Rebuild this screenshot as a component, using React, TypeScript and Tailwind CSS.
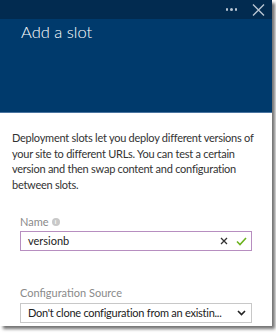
import React from "react";

export default function App() {
  return (
    <div className="w-[276px] h-[335px] bg-white" style={{ fontFamily: 'Lato, "Noto Sans", sans-serif' }}>
      <div className="w-[272px] h-[326px] bg-white flex flex-col shadow-[3px_3px_3px_rgba(0,0,0,0.55)]">
        <div className="h-[19px] bg-[#022b50] flex items-center justify-end pr-[7px] gap-[15px] shrink-0">
          <span className="flex gap-[2px] items-center">
            <span className="w-[2.5px] h-[2.5px] bg-[#b8c4d2] rounded-full" />
            <span className="w-[2.5px] h-[2.5px] bg-[#b8c4d2] rounded-full" />
            <span className="w-[2.5px] h-[2.5px] bg-[#b8c4d2] rounded-full" />
          </span>
          <svg width="13" height="12" viewBox="0 0 13 12">
            <path d="M1 0.5 L12 11.5 M12 0.5 L1 11.5" stroke="#b8c4d2" strokeWidth="1.4" />
          </svg>
        </div>
        <div className="h-[94px] bg-[#003a6c] shrink-0 pl-[21px] pt-[3px] border-b border-[#4a74a0]">
          <div className="text-[16.5px] leading-[20px] text-white font-light">Add a slot</div>
        </div>
        <div className="pl-[12px] pr-[10px] pt-[17px] text-[11px] leading-[15.5px] text-[#333] tracking-[-0.25px]">
          Deployment slots let you deploy different versions of your site to different URLs. You can test a certain version and then swap content and configuration between slots.
        </div>
        <div className="pl-[20px] pr-[20px] pt-[22px]">
          <div className="flex items-center gap-[3px] text-[11px] leading-[15px] text-[#8a8a8a]">
            Name
            <span className="w-[8px] h-[8px] rounded-full bg-[#c8c8c8] text-white text-[6px] leading-[8px] text-center font-bold">i</span>
          </div>
          <div className="mt-[2px] h-[20px] border border-[#b78ec0] flex items-center pl-[7px] pr-[4px] text-[11px] text-[#222]">
            <span className="flex-1">versionb</span>
            <svg width="8" height="8" viewBox="0 0 8 8" className="mr-[8px]">
              <path d="M1 1 L7 7 M7 1 L1 7" stroke="#333" strokeWidth="1.3" />
            </svg>
            <svg width="11" height="9" viewBox="0 0 11 9">
              <path d="M1 4.5 L4 7.5 L10 1" stroke="#6cb31f" strokeWidth="1.6" fill="none" />
            </svg>
          </div>
          <div className="mt-[34px] text-[11px] leading-[15px] text-[#8a8a8a]">Configuration Source</div>
          <div className="mt-[3px] h-[20px] border border-[#c8c8c8] flex items-center pl-[7px] pr-[5px] text-[11px] text-[#222] tracking-[-0.25px]">
            <span className="flex-1 whitespace-nowrap">Don't clone configuration from an existin...</span>
            <svg width="9" height="6" viewBox="0 0 9 6">
              <path d="M1 1 L4.5 4.5 L8 1" stroke="#222" strokeWidth="1.6" fill="none" />
            </svg>
          </div>
        </div>
      </div>
    </div>
  );
}
